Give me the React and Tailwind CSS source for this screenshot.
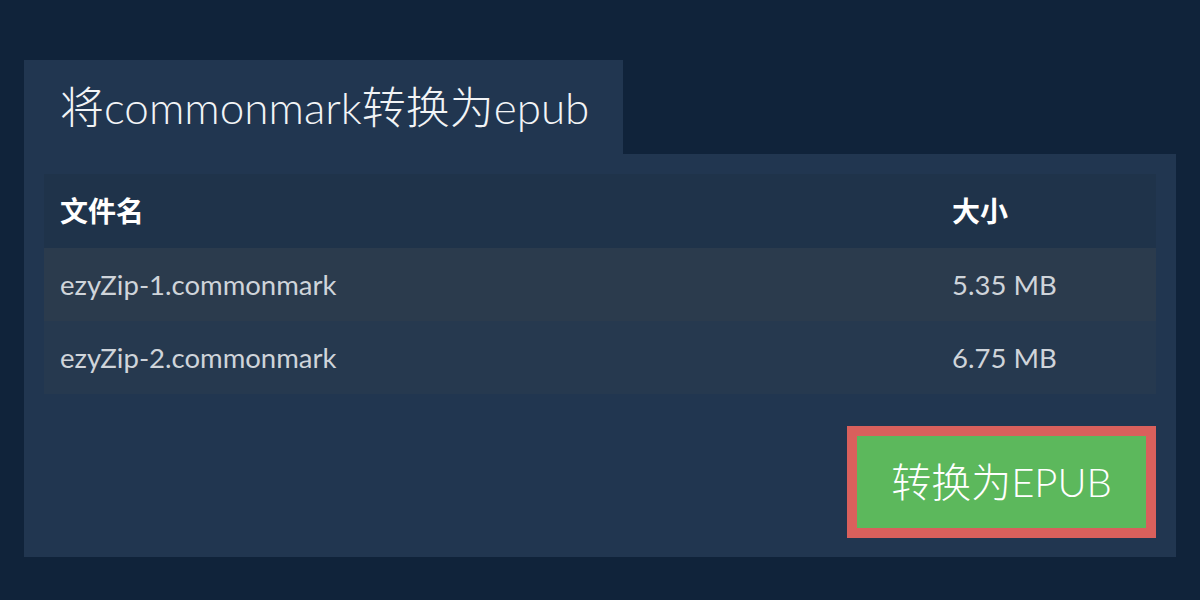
export default function App() {
  const rows = [
    { name: "ezyZip-1.commonmark", size: "5.35 MB", bg: "bg-[#2b3b4d]" },
    { name: "ezyZip-2.commonmark", size: "6.75 MB", bg: "bg-[#26394f]" },
  ];
  const font = { fontFamily: 'Lato, "Noto Sans CJK SC", sans-serif' };
  return (
    <div className="w-[1200px] h-[600px] bg-[#10233a] pt-[60px] px-[24px]" style={font}>
      <div className="flex">
        <div className="bg-[#213650] h-[94px] pl-[36px] pr-[34px] flex items-center">
          <h1 className="text-[44px] font-light text-[#f2f4f6] leading-none">将commonmark转换为epub</h1>
        </div>
      </div>
      <div className="bg-[#213650] px-[20px] pt-[20px] pb-[19px]">
        <div className="flex flex-col">
          <div className="flex h-[74px] items-center bg-[#1f334a] text-white font-bold text-[28px]">
            <div className="flex-1 pl-[16px]">文件名</div>
            <div className="w-[220px] pl-[16px]">大小</div>
          </div>
          {rows.map((r) => (
            <div key={r.name} className={`flex h-[73px] items-center ${r.bg} text-[#cfd4da] text-[27.5px]`}>
              <div className="flex-1 pl-[16px]">{r.name}</div>
              <div className="w-[220px] pl-[16px]">{r.size}</div>
            </div>
          ))}
        </div>
        <div className="flex justify-end mt-[32px]">
          <button className="border-[10px] border-[#d9605c] bg-[#5cb85c] w-[309px] h-[112px] text-[40px] font-light text-white leading-none">
            转换为EPUB
          </button>
        </div>
      </div>
    </div>
  );
}
